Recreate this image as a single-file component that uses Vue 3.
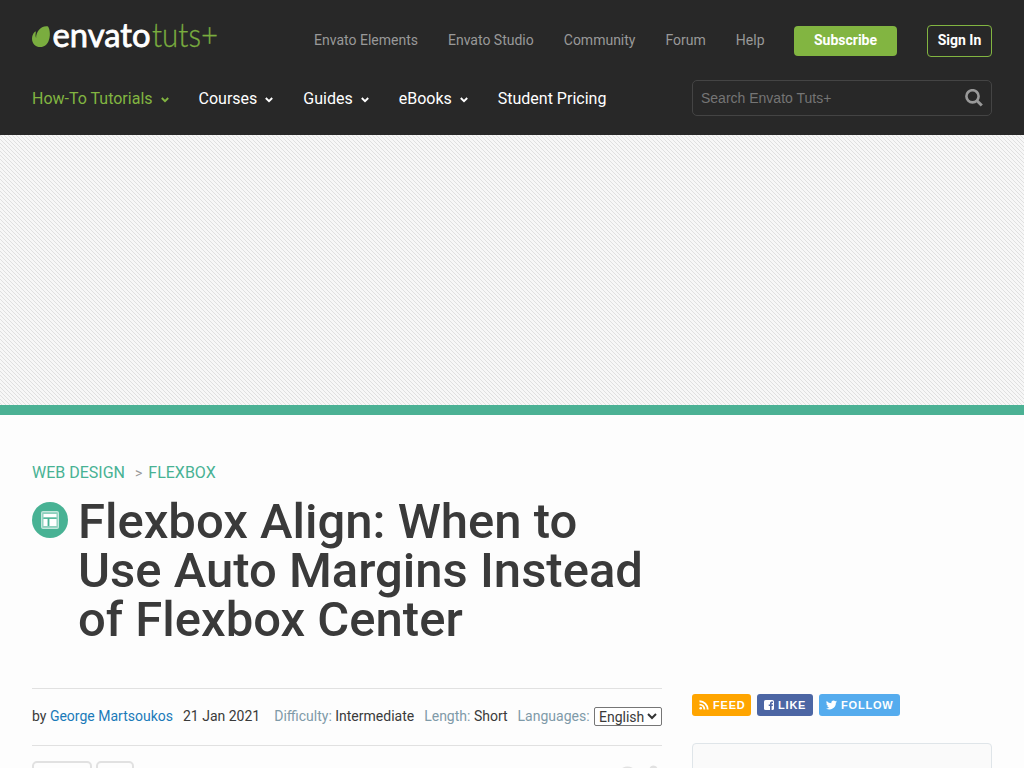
<script setup>
const links = ['Envato Elements', 'Envato Studio', 'Community', 'Forum', 'Help']
const nav = [
  { label: 'How-To Tutorials', menu: true, active: true },
  { label: 'Courses', menu: true },
  { label: 'Guides', menu: true },
  { label: 'eBooks', menu: true },
  { label: 'Student Pricing' }
]
</script>

<template>
  <div class="page">
    <header class="header">
      <div class="top">
        <svg class="logo" width="194" height="52" viewBox="0 -12 194 52">
          <path d="M15.5 6.2C17.4 7.1 19 14.4 16.9 20C15.5 24.800 12.3 27 8.4 27C3.5 27 0 23.4 0 18.7C0 15.900 1 13.600 2.700 12C3.600 11.200 4 11.700 3.800 12.600C3.400 14.600 3.500 16.600 4.100 17.900C4 11.800 8.500 5.500 15.500 6.200Z" fill="#7aad3f" />
          <text x="20.5" y="26.600" textLength="98" lengthAdjust="spacingAndGlyphs" class="logo-main">envato</text>
          <text x="120" y="26.600" textLength="66" lengthAdjust="spacingAndGlyphs" class="logo-sub">tuts+</text>
        </svg>
        <nav class="links">
          <a v-for="l in links" :key="l">{{ l }}</a>
          <a class="subscribe">Subscribe</a>
          <a class="signin">Sign In</a>
        </nav>
      </div>
      <div class="bottom">
        <nav class="nav">
          <a v-for="n in nav" :key="n.label" :class="{ active: n.active }">
            <span>{{ n.label }}</span>
            <svg v-if="n.menu" width="8" height="6" viewBox="0 0 8 6"><path d="M.8 1L4 4.2L7.2 1" fill="none" stroke="currentColor" stroke-width="1.9" /></svg>
          </a>
        </nav>
        <div class="search">
          <span>Search Envato Tuts+</span>
          <svg width="18" height="18" viewBox="0 0 18 18" fill="none" stroke="#999"><circle cx="7.5" cy="7.3" r="6.1" stroke-width="2.6" /><path d="M11.700 11.500L16.800 16.500" stroke-width="3" /></svg>
        </div>
      </div>
    </header>

    <div class="banner">
      <svg width="1024" height="270">
        <defs><pattern id="hatch" width="4" height="4" patternUnits="userSpaceOnUse" shape-rendering="crispEdges"><path d="M0 0h1v1H0zM1 1h1v1H1zM2 2h1v1H2zM3 3h1v1H3z" fill="#e0e0e0" /></pattern></defs>
        <rect width="1024" height="270" fill="url(#hatch)" />
      </svg>
    </div>

    <main class="content">
      <div class="article">
        <div class="crumbs"><a>WEB DESIGN</a><i>&gt;</i><a>FLEXBOX</a></div>
        <div class="heading">
          <svg class="badge" width="36" height="36" viewBox="0 0 36 36">
            <circle cx="18" cy="18" r="18" fill="#48b294" />
            <rect x="9.6" y="9.6" width="16.800" height="16.800" rx="1.500" fill="#8dd0bd" stroke="#c4e7dd" stroke-width="1.2" />
            <path d="M11.500 12H24.500v3.500H11.500zM11.500 17H15.500v7H11.500zM17.500 17H24.500v7H17.500z" fill="#fff" />
            <path d="M11.500 16.200H24.500M16.500 16.500V24" stroke="#48b294" stroke-width="1.300" />
          </svg>
          <h1>Flexbox Align: When to Use Auto Margins Instead of Flexbox Center</h1>
        </div>
        <div class="meta">
          <span class="author">by <a>George Martsoukos</a></span>
          <span class="date">21 Jan 2021</span>
          <span class="difficulty"><b>Difficulty:</b> Intermediate</span>
          <span class="length"><b>Length:</b> Short</span>
          <span class="languages"><b>Languages:</b></span>
          <span class="select">English<svg width="10" height="7" viewBox="0 0 10 7"><path d="M1 1L5 5L9 1" fill="none" stroke="#333" stroke-width="2" /></svg></span>
        </div>
        <div class="share">
          <span class="pill wide"></span><span class="pill"></span>
          <svg width="40" height="7" viewBox="0 0 40 7" fill="#e1e1e1"><ellipse cx="5.500" cy="8.500" rx="6" ry="3" /><circle cx="31.500" cy="8.500" r="4" /></svg>
        </div>
      </div>
      <aside class="side">
        <div class="social">
          <a class="feed"><svg width="10" height="10" viewBox="0 0 10 10" fill="none" stroke="#fff" stroke-width="1.900"><circle cx="1.700" cy="8.300" r="1.300" fill="#fff" stroke="none" /><path d="M.500 4.600A4.900 4.900 0 0 1 5.400 9.500M.500 1.300A8.200 8.200 0 0 1 8.700 9.500" /></svg>FEED</a>
          <a class="like"><svg width="10" height="10" viewBox="0 0 10 10"><rect width="10" height="10" rx="1.600" fill="#fff" /><path d="M6 10V6.100H4.700V4.600H6V3.500C6 2.100 6.800 1.500 8 1.500H9V3H8.300C7.800 3 7.600 3.200 7.600 3.700V4.600H9L8.800 6.100H7.600V10Z" fill="#4c66a4" /></svg>LIKE</a>
          <a class="follow"><svg width="11" height="10" viewBox="1 2.5 22 19" fill="#fff"><path d="M23 5.100a9 9 0 0 1-2.600.7 4.500 4.500 0 0 0 2-2.500 9 9 0 0 1-2.900 1.100A4.500 4.500 0 0 0 11.800 8.500 12.800 12.800 0 0 1 2.500 3.800 4.500 4.500 0 0 0 3.900 9.800 4.500 4.500 0 0 1 1.900 9.200a4.500 4.500 0 0 0 3.600 4.500 4.500 4.500 0 0 1-2 .1 4.500 4.500 0 0 0 4.200 3.100A9 9 0 0 1 1 18.800 12.800 12.800 0 0 0 20.700 7.400 9 9 0 0 0 23 5.100Z" /></svg>FOLLOW</a>
        </div>
        <div class="panel"></div>
      </aside>
    </main>
  </div>
</template>

<style>
body { margin: 0; background: #fdfdfd; overflow: hidden; }
</style>

<style scoped>
.page { box-sizing: border-box; width: 1024px; height: 768px; overflow: hidden; font-family: Roboto, sans-serif; color: #3a3a3a; background: #fdfdfd; }
.page * { box-sizing: border-box; }
svg { display: block; flex: none; }
a { white-space: nowrap; }
.header { height: 135px; padding: 20px 32px 0; background: #282828; }
.top { display: flex; height: 60px; }
.logo { margin-top: -12px; }
.logo-main { font: 400 33px Lato, sans-serif; fill: #fff; stroke: #fff; stroke-width: .8px; }
.logo-sub { font: 300 33px Lato, sans-serif; fill: #7aad3f; stroke: #7aad3f; stroke-width: .3px; }
.links { display: flex; gap: 30px; margin-left: auto; height: 40px; align-items: center; font-size: 14px; color: #999; }
.links a:not([class]) { position: relative; left: .5px; }
.subscribe { width: 103px; height: 30px; line-height: 29px; margin-top: 1px; border-radius: 4px; background: #82b541; color: #fff; text-align: center; font-weight: 700; }
.signin { width: 65px; height: 32px; line-height: 29px; margin-top: 1px; border: 1px solid #82b541; border-radius: 4px; color: #fff; text-align: center; font-weight: 700; }
.bottom { display: flex; justify-content: space-between; }
.nav { display: flex; gap: 30px; height: 37px; align-items: center; font-size: 16px; color: #fff; }
.nav a { display: flex; align-items: center; gap: 8px; }
.nav svg { margin-top: 2px; }
.nav .active { color: #82b541; }
.search { display: flex; justify-content: space-between; align-items: center; width: 300px; height: 36px; padding: 0 8px; border: 1px solid #444; border-radius: 5px; font: 14px "Liberation Sans", sans-serif; color: #757575; }
.banner { height: 280px; background: #f7f7f7; border-bottom: 10px solid #4bb194; }
.content { display: flex; gap: 30px; padding: 0 32px; }
.article { width: 630px; }
.crumbs { display: flex; margin-top: 48px; height: 20px; line-height: 20px; font-size: 16px; color: #48b294; }
.crumbs i { margin: 0 6px 0 10px; font-size: 14px; font-style: normal; color: #999; }
.heading { display: flex; gap: 10px; margin-top: 14px; height: 191px; }
.badge { margin-top: 5px; }
h1 { margin: 0; font-size: 49px; line-height: 49px; font-weight: 500; color: #3a3a3a; width: 584px; }
.meta { display: flex; align-items: center; height: 58px; border: solid #e1e1e1; border-width: 1px 0; font-size: 14px; white-space: nowrap; }
.meta > span { margin-top: -2px; }
.meta a { color: #1a7ab9; }
.meta b { font-weight: 400; color: #7f9aa8; }
.date { margin-left: 10px; }
.difficulty { margin-left: 14px; }
.length, .languages { margin-left: 10px; }
.meta .select { display: flex; align-items: center; justify-content: space-between; width: 68px; height: 19px; margin: -1px 0 0 auto; padding: 0 4px; border: 1px solid #767676; border-radius: 2px; background: #fff; }
.share { display: flex; gap: 4px; margin-top: 15px; }
.pill { width: 38px; height: 36px; border: 2px solid #e1e1e1; border-radius: 5px; }
.wide { width: 60px; }
.share svg { margin-left: auto; }
.side { width: 300px; padding-top: 279px; }
.social { display: flex; gap: 6px; }
.social a { display: flex; align-items: center; gap: 4px; height: 22px; padding-left: 7px; border-radius: 3px; color: #fff; font: 700 11px "Liberation Sans", sans-serif; letter-spacing: .8px; }
.feed { width: 59px; background: #ffa500; }
.like { width: 56px; background: #4c66a4; }
.follow { width: 81px; background: #55acee; }
.panel { height: 80px; margin-top: 27px; border: 1px solid #dfe5e9; border-radius: 4px; background: #fafafa; }
</style>
